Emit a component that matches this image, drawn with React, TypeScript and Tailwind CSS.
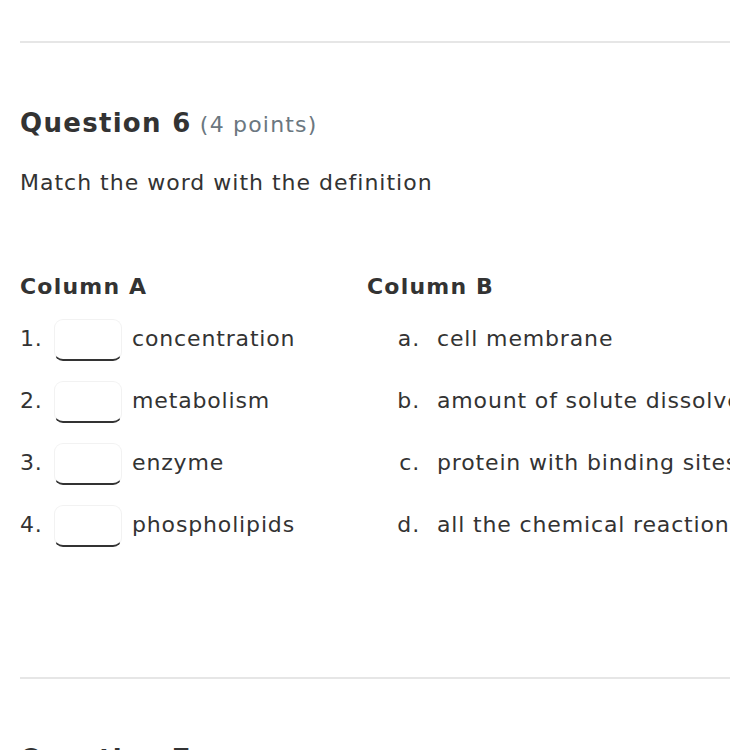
import React from "react";

const left = [
  { n: "1.", word: "concentration" },
  { n: "2.", word: "metabolism" },
  { n: "3.", word: "enzyme" },
  { n: "4.", word: "phospholipids" },
];

const right = [
  { l: "a.", text: "cell membrane" },
  { l: "b.", text: "amount of solute dissolved in a solution" },
  { l: "c.", text: "protein with binding sites for substrates" },
  { l: "d.", text: "all the chemical reactions in an organism" },
];

const Blank: React.FC = () => (
  <div className="w-[68px] h-[42px] mt-[4px] rounded-[9px] border border-[#f2f2f2] border-b-2 border-b-[#333] bg-white shrink-0" />
);

export default function App() {
  return (
    <div
      className="w-[750px] h-[750px] overflow-hidden bg-white text-[#333] px-5"
      style={{ fontFamily: '"DejaVu Sans", Verdana, sans-serif' }}
    >
      <div className="pt-[41px]">
        <div className="h-[2px] bg-[#e6e6e6]" />
      </div>

      {/* Question 6 */}
      <div className="pt-[62px]">
        <h2 className="text-[26px] leading-[36px]">
          <span className="font-bold tracking-[1.3px]">Question 6</span>{" "}
          <span className="text-[22px] text-[#6b7780] tracking-[1.2px]">(4 points)</span>
        </h2>
        <p className="mt-[25px] text-[22px] leading-[30px] tracking-[1px]">
          Match the word with the definition
        </p>

        <div className="mt-[75px] flex">
          {/* Column A */}
          <div className="w-[347px] shrink-0">
            <div className="text-[22px] font-bold leading-[28px] tracking-[1.2px]">Column A</div>
            <div className="mt-[16px] flex flex-col gap-[20px]">
              {left.map((r) => (
                <div key={r.n} className="flex items-center h-[42px] text-[22px] tracking-[0.85px]">
                  <span className="w-[34px]">{r.n}</span>
                  <Blank />
                  <span className="ml-[10px]">{r.word}</span>
                </div>
              ))}
            </div>
          </div>

          {/* Column B */}
          <div className="flex-1 min-w-0 overflow-hidden">
            <div className="text-[22px] font-bold leading-[28px] tracking-[1.2px]">Column B</div>
            <div className="mt-[16px] flex flex-col gap-[20px]">
              {right.map((r) => (
                <div
                  key={r.l}
                  className="flex items-center h-[42px] text-[22px] tracking-[0.85px] whitespace-nowrap"
                >
                  <span className="w-[53px] shrink-0 text-right">{r.l}</span>
                  <span className="ml-[17px] shrink-0">{r.text}</span>
                </div>
              ))}
            </div>
          </div>
        </div>
      </div>

      <div className="pt-[132px]">
        <div className="h-[2px] bg-[#e6e6e6]" />
      </div>

      <div className="pt-[62px]">
        <h2 className="text-[26px] leading-[36px] font-bold tracking-[1.3px]">Question 7</h2>
      </div>
    </div>
  );
}
